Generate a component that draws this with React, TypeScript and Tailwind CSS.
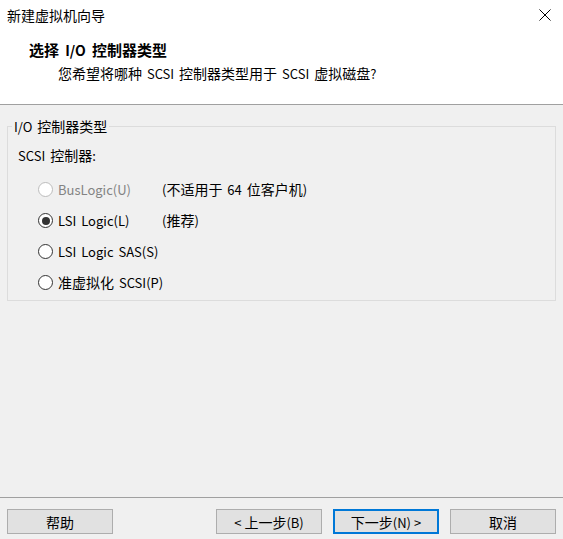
import { FC } from 'react';

// CJK runs are drawn a touch larger than Latin, like YaHei UI next to Segoe UI
const T: FC<{ text: string; big?: boolean }> = ({ text, big }) => (
    <>
        {text.split(/([\u3000-\u9fff\uff00-\uffef]+)/).map((part, i) =>
            /[\u3000-\u9fff\uff00-\uffef]/.test(part) ? (
                <span key={i} className={big ? 'text-[15px]' : 'text-[14px]'}>
                    {part}
                </span>
            ) : (
                <span key={i}>{part}</span>
            )
        )}
    </>
);

const Radio: FC<{ checked?: boolean; disabled?: boolean }> = ({ checked, disabled }) => (
    <span
        className={`w-[15px] h-[15px] rounded-full border bg-white flex items-center justify-center shrink-0 ${
            disabled ? 'border-[#bcbcbc]' : 'border-[#333333]'
        }`}
    >
        {checked && <span className="w-[8px] h-[8px] rounded-full bg-[#333333]" />}
    </span>
);

const options = [
    { label: 'BusLogic(U)', note: '(不适用于 64 位客户机)', disabled: true },
    { label: 'LSI Logic(L)', note: '(推荐)', checked: true },
    { label: 'LSI Logic SAS(S)' },
    { label: '准虚拟化 SCSI(P)' },
];

const Button: FC<{ label: string; primary?: boolean }> = ({ label, primary }) => (
    <button
        className={`w-[106px] h-[25px] bg-[#e1e1e1] flex items-center justify-center leading-none ${
            primary ? 'border-2 border-[#0078d7]' : 'border border-[#adadad]'
        }`}
    >
        <span className="whitespace-nowrap">
            <T text={label} />
        </span>
    </button>
);

export default function App() {
    return (
        <div className="w-[563px] h-[539px] bg-[#f0f0f0] flex flex-col text-[13px] text-black [word-spacing:2px] font-['Noto_Sans_CJK_SC','Noto_Sans',sans-serif]">
            {/* Header */}
            <div className="h-[105px] bg-white border-b border-[#a0a0a0] shrink-0">
                <div className="h-[30px] flex items-center justify-between pl-[7px] pr-[12px]">
                    <span className="text-[14px]">新建虚拟机向导</span>
                    <svg width="12" height="12" viewBox="0 0 12 12" className="text-black">
                        <path d="M0.5 0.5L11.5 11.5M11.5 0.5L0.5 11.5" stroke="currentColor" strokeWidth="1" />
                    </svg>
                </div>
                <div className="pl-[29px] mt-[10px] h-[20px] flex items-center font-bold text-[14px] [word-spacing:3px]">
                    <span>
                        <T text="选择 I/O 控制器类型" big />
                    </span>
                </div>
                <div className="pl-[58px] mt-[3px] h-[20px] flex items-center">
                    <span>
                        <T text="您希望将哪种 SCSI 控制器类型用于 SCSI 虚拟磁盘?" />
                    </span>
                </div>
            </div>

            {/* Body */}
            <div className="flex-1 px-[7px] pt-[21px]">
                <div className="relative h-[175px] border border-[#dcdcdc] pl-[10px] pt-[19px]">
                    <span className="absolute -top-[10px] left-[4px] bg-[#f0f0f0] px-[2px] h-[18px] flex items-center">
                        <span>
                            <T text="I/O 控制器类型" />
                        </span>
                    </span>
                    <div className="h-[18px] flex items-center">
                        <span>
                            <T text="SCSI 控制器:" />
                        </span>
                    </div>
                    <div className="mt-[10px] ml-[20px] flex flex-col">
                        {options.map(opt => (
                            <div key={opt.label} className="h-[31px] flex items-center">
                                <Radio checked={opt.checked} disabled={opt.disabled} />
                                <span
                                    className={`ml-[5px] min-w-[104px] whitespace-nowrap ${
                                        opt.disabled ? 'text-[#838383]' : ''
                                    }`}
                                >
                                    <T text={opt.label} />
                                </span>
                                {opt.note && (
                                    <span className="whitespace-nowrap">
                                        <T text={opt.note} />
                                    </span>
                                )}
                            </div>
                        ))}
                    </div>
                </div>
            </div>

            {/* Footer */}
            <div className="h-[42px] border-t border-[#a0a0a0] pt-[11px] px-[7px] flex items-start shrink-0">
                <Button label="帮助" />
                <div className="flex-1" />
                <div className="flex gap-[11px]">
                    <Button label="< 上一步(B)" />
                    <Button label="下一步(N) >" primary />
                    <Button label="取消" />
                </div>
            </div>
        </div>
    );
}
